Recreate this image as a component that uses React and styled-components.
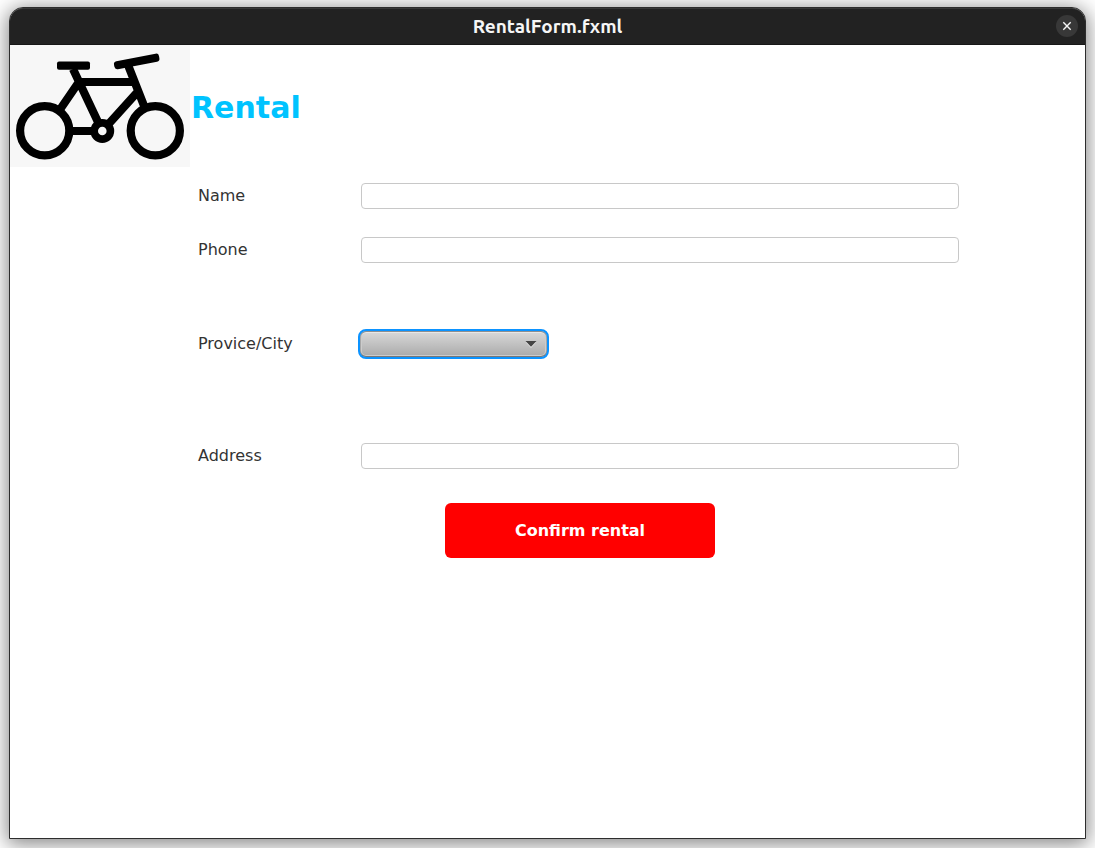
import React from "react";
import styled, { createGlobalStyle } from "styled-components";

const GlobalStyle = createGlobalStyle`
  *, *::before, *::after { box-sizing: border-box; }
  body {
    margin: 0;
    background: #ffffff;
    color: #333333;
    font-family: "DejaVu Sans", Verdana, sans-serif;
    font-size: 16px;
  }
`;

const Desktop = styled.div`
  display: flex;
  min-height: 100vh;
  padding: 7px 9px 9px;
  overflow: hidden;
`;

const Window = styled.main`
  flex: 1;
  display: flex;
  flex-direction: column;
  border: 1px solid #2d2d2d;
  border-radius: 14px 14px 0 0;
  background: #ffffff;
  box-shadow: 0 3px 20px 2px rgba(0, 0, 0, 0.48);
`;

const TitleBar = styled.header`
  display: grid;
  grid-template-columns: 1fr auto 1fr;
  align-items: center;
  height: 37px;
  padding: 0 7px 2px;
  border-top: 1px solid #383838;
  border-bottom: 1px solid #171717;
  border-radius: 13px 13px 0 0;
  background: #222222;
`;

const WindowTitle = styled.span`
  grid-column: 2;
  color: #f6f6f6;
  font-family: Ubuntu, "Noto Sans", sans-serif;
  font-size: 19px;
  font-weight: 700;
  line-height: 24px;
`;

const CloseButton = styled.button`
  justify-self: end;
  display: grid;
  place-items: center;
  width: 22px;
  height: 22px;
  padding: 0;
  border: 0;
  border-radius: 50%;
  background: #383838;
  color: #f6f6f6;
`;

const Heading = styled.div`
  display: flex;
  align-items: center;
  gap: 1px;
`;

const Title = styled.h1`
  margin: 0;
  padding-top: 4px;
  color: #00c3ff;
  font-size: 30px;
  font-weight: 700;
  line-height: 36px;
`;

const Form = styled.form`
  display: flex;
  flex-direction: column;
  padding: 16px 123px 32px 188px;
`;

const Field = styled.div`
  display: grid;
  grid-template-columns: 160px 1fr;
  align-items: center;
  min-height: 26px;
  margin-bottom: ${({ $space }) => $space}px;
`;

const Label = styled.label`
  line-height: 24px;
`;

const TextInput = styled.input`
  min-width: 0;
  height: 26px;
  margin: 0 3px;
  padding: 0 8px;
  border: 1px solid #c8c8c8;
  border-radius: 4px;
  background: #ffffff;
  color: inherit;
  font: inherit;
  outline: none;
`;

const SelectBox = styled.div`
  display: grid;
  align-items: center;
  width: 191px;
  > * { grid-area: 1 / 1; }
`;

const Select = styled.select`
  appearance: none;
  width: 100%;
  height: 30px;
  padding: 0 32px 0 8px;
  border: 2px solid #0c93ff;
  border-radius: 8px;
  background: linear-gradient(#dadada, #a9a9a9);
  box-shadow: inset 0 1px 0 #8f8f8f, inset 0 -1px 0 #777777,
    inset 0 0 0 1px #a8a8a8, inset 0 2px 0 #e8e8e8, inset 0 0 0 2px #cccccc;
  color: inherit;
  font: inherit;
  outline: none;
`;

const Arrow = styled.svg`
  justify-self: end;
  margin-right: 12px;
  pointer-events: none;
`;

const ConfirmButton = styled.button`
  align-self: center;
  width: 270px;
  height: 55px;
  border: 0;
  border-radius: 6px;
  background: #ff0000;
  color: #ffffff;
  font: inherit;
  font-weight: 700;
`;

function Bicycle() {
  return (
    <svg width="180" height="122" viewBox="0 0 180 122" role="img" aria-label="Bicycle">
      <rect width="180" height="122" fill="#f7f7f7" />
      <g fill="none" stroke="#000" strokeWidth="8.2">
        <circle cx="34.7" cy="85.8" r="24.6" />
        <circle cx="145.3" cy="85.8" r="24.6" />
        <circle cx="92.3" cy="86" r="8.1" strokeWidth="7.6" />
        <path d="M61 86H83M63 24L88 77M68.5 37.5L50 64.5M67 37H126M118 20L134.5 62M127.5 47L99.5 78" />
      </g>
      <rect x="47" y="16.4" width="33" height="8.4" rx="2" />
      <rect x="103.8" y="12.4" width="45.8" height="8.2" rx="3" transform="rotate(-10.8 126.5 16.5)" />
    </svg>
  );
}

function TextField({ id, label, space }) {
  return (
    <Field $space={space}>
      <Label htmlFor={id}>{label}</Label>
      <TextInput id={id} name={id} type="text" />
    </Field>
  );
}

export default function App() {
  return (
    <>
      <GlobalStyle />
      <Desktop>
        <Window>
          <TitleBar>
            <WindowTitle>RentalForm.fxml</WindowTitle>
            <CloseButton type="button" aria-label="Close">
              <svg width="10" height="10" viewBox="0 0 10 10" aria-hidden="true">
                <path d="M1.3 1.3L8.7 8.7M8.7 1.3L1.3 8.7" stroke="currentColor" strokeWidth="1.4" />
              </svg>
            </CloseButton>
          </TitleBar>
          <Heading>
            <Bicycle />
            <Title>Rental</Title>
          </Heading>
          <Form onSubmit={(event) => event.preventDefault()}>
            <TextField id="name" label="Name" space={28} />
            <TextField id="phone" label="Phone" space={66} />
            <Field $space={84}>
              <Label htmlFor="city">Provice/City</Label>
              <SelectBox>
                <Select id="city" name="city" defaultValue="">
                  <option value="" />
                </Select>
                <Arrow width="12" height="8" viewBox="0 0 12 8" aria-hidden="true">
                  <path d="M0.5 2H11.5L6 8Z" fill="#e2e2e2" />
                  <path d="M0.5 1H11.5L6 6.8Z" fill="#454545" />
                </Arrow>
              </SelectBox>
            </Field>
            <TextField id="address" label="Address" space={34} />
            <ConfirmButton type="submit">Confirm rental</ConfirmButton>
          </Form>
        </Window>
      </Desktop>
    </>
  );
}
